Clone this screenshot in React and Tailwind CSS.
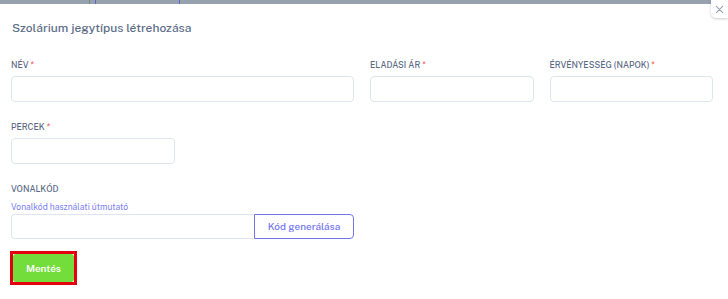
import React from 'react';

const font = { fontFamily: '"Public Sans", Inter, "Noto Sans", sans-serif' };

function Label({ children, required }) {
  return (
    <div className="text-[8.5px] leading-[12px] font-medium uppercase text-[#5a6a85] mb-[5px]">
      {children}
      {required && <span className="text-[#fa5a5a] ml-[2px]">*</span>}
    </div>
  );
}

function Field({ label, required, className = '' }) {
  return (
    <div className={className}>
      <Label required={required}>{label}</Label>
      <input className="block w-full h-[26px] rounded-[4px] border border-[#dfe5ef] bg-white outline-none" />
    </div>
  );
}

export default function App() {
  return (
    <div className="relative w-[728px] h-[299px] bg-white overflow-hidden" style={font}>
      {/* backdrop strip of the page behind */}
      <div className="h-[4px] bg-[#98a1ae] relative overflow-hidden">
        <div className="absolute left-[89px] top-0 h-[4px] w-px bg-[#7d8594]" />
        <div className="absolute left-[95px] top-0 h-[4px] w-[85px] border-x border-[#5d66c9]" />
      </div>

      {/* close button */}
      <button className="absolute top-0 right-0 w-[17px] h-[18px] bg-white rounded-bl-[5px] shadow-[0_1px_3px_rgba(0,0,0,0.2)] flex items-center justify-center text-[#9aa3b0]">
        <svg width="9" height="9" viewBox="0 0 10 10" fill="none" stroke="currentColor" strokeWidth="1.3" strokeLinecap="round">
          <path d="M1.5 1.5l7 7M8.5 1.5l-7 7" />
        </svg>
      </button>

      <div className="pl-[11px] pr-[15px]">
        <h2 className="pt-[16px] pl-[1px] text-[12px] leading-[16px] font-medium text-[#5d6d88]">
          Szolárium jegytípus létrehozása
        </h2>

        <div className="grid grid-cols-12 gap-x-[16px] mt-[23px]">
          <Field className="col-span-6" label="Név" required />
          <Field className="col-span-3" label="Eladási ár" required />
          <Field className="col-span-3" label="Érvényesség (napok)" required />
        </div>

        <div className="grid grid-cols-12 gap-x-[16px] mt-[19px]">
          <Field className="col-span-3" label="Percek" required />
        </div>

        <div className="grid grid-cols-12 gap-x-[16px] mt-[19px]">
          <div className="col-span-6">
            <div className="text-[8.5px] leading-[12px] font-medium uppercase text-[#5a6a85]">Vonalkód</div>
            <a className="block mt-[6px] mb-[1px] text-[8.5px] leading-[12px] text-[#7c80ef] cursor-pointer">
              Vonalkód használati útmutató
            </a>
            <div className="flex h-[25px]">
              <input className="flex-1 min-w-0 rounded-l-[4px] border border-r-0 border-[#dfe5ef] outline-none" />
              <button className="w-[100px] rounded-r-[4px] border border-[#7377ec] text-[10px] font-medium text-[#7377ec]">
                Kód generálása
              </button>
            </div>
          </div>
        </div>

        <div className="mt-[12px] -ml-[1px] inline-block border-[3px] border-[#e3000f]">
          <button className="block w-[61px] h-[28px] bg-[#73dd3b] rounded-[3px] text-[10px] font-semibold text-white">
            Mentés
          </button>
        </div>
      </div>
    </div>
  );
}
